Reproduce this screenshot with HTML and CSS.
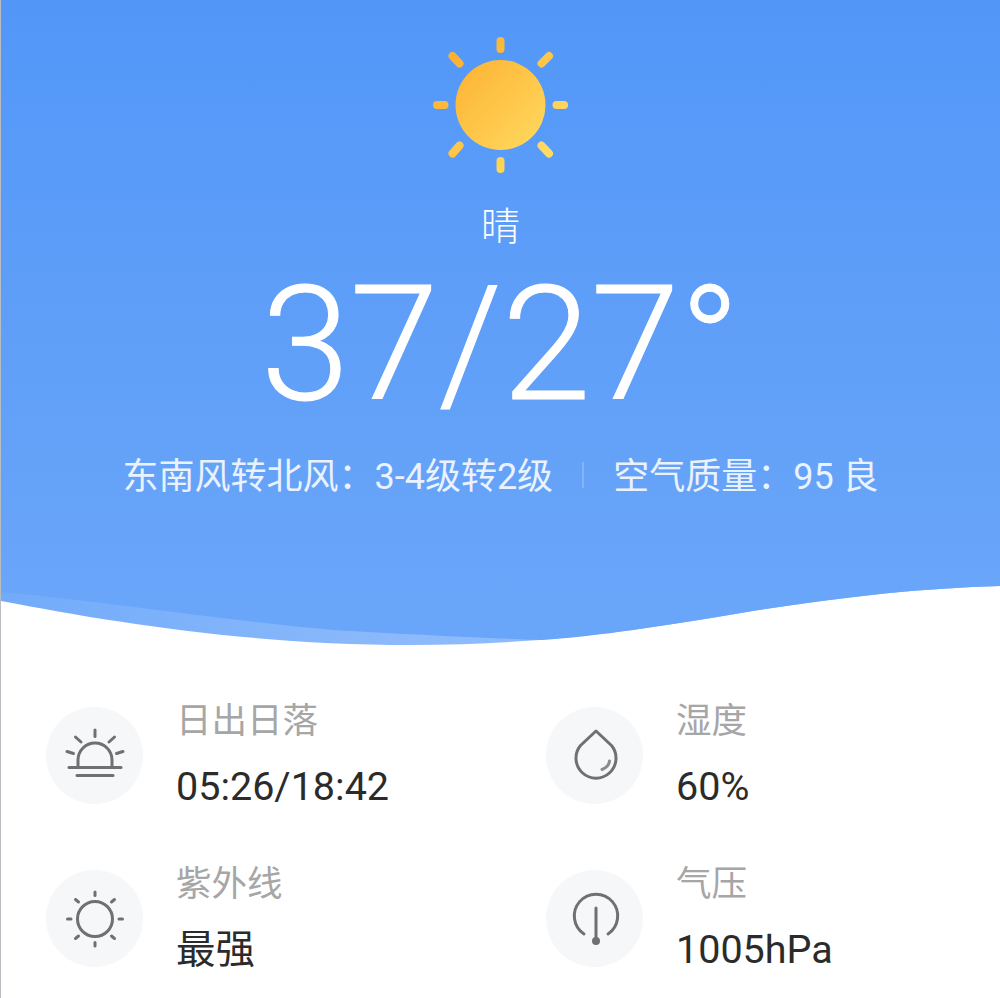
FILE: index.html
```html
<!DOCTYPE html>
<html lang="zh-CN">
  <head>
    <meta charset="utf-8" />
    <meta name="viewport" content="width=device-width, initial-scale=1" />
    <title>天气</title>
    <link rel="stylesheet" href="styles.css">
  </head>

  <body>
    <main class="page">
      <section class="hero">
        <svg class="sun" width="136" height="136" viewBox="0 0 136 136">
          <defs>
            <linearGradient id="sunFill" gradientUnits="userSpaceOnUse" x1="20" y1="20" x2="116" y2="116">
              <stop offset="0" stop-color="#fdb030" />
              <stop offset="1" stop-color="#ffdc62" />
            </linearGradient>
          </defs>
          <g stroke="url(#sunFill)" stroke-width="8" stroke-linecap="round" fill="none">
            <path d="M67.500 4V12" />
            <path d="M67.500 124V132" />
            <path d="M4 68H11.500" />
            <path d="M123.500 68H131" />
            <path d="M19.500 19L26.500 26.500" />
            <path d="M116 19L108.500 26.500" />
            <path d="M19.500 116.500L26.500 108.500" />
            <path d="M108.500 108.500L116 116.500" />
          </g>
          <circle cx="67.500" cy="68" r="45" fill="url(#sunFill)" />
        </svg>
        <div class="condition">晴</div>
        <div class="temp">37/27°</div>
        <div class="summary">
          <span>东南风转北风<span class="colon">：</span>3-4级转2级</span>
          <i class="divider"></i>
          <span>空气质量<span class="colon">：</span>95 良</span>
        </div>
      </section>
      <svg class="wave" width="1000" height="70" viewBox="0 0 1000 70">
        <defs>
          <linearGradient id="bandFade" gradientUnits="userSpaceOnUse" x1="0" y1="0" x2="420" y2="0">
            <stop offset="0" stop-color="#72abfa" />
            <stop offset="1" stop-color="#8dbafb" />
          </linearGradient>
        </defs>
        <path fill="url(#bandFade)" d="M0 0H1000V6C920 8 830 18 740 33C640 50 540 65 410 65C250 65 110 42 0 21Z" />
        <path class="wave-front" d="M0 0H1000V6C920 8 830 18 740 33C660 46 600 56 540 60C480 58 400 54 333 50C220 40 110 22 0 12Z" />
      </svg>
      <section class="stats">
        <div class="stat">
          <div class="stat-icon">
            <svg width="60" height="60" viewBox="0 0 60 60" fill="none" stroke="#6f7072" stroke-width="3" stroke-linecap="round">
              <path d="M13 41V34A17 17 0 0 1 47 34V41" />
              <path d="M4 41.500H56" />
              <path d="M12 49.500H48" />
              <path d="M30 4V10.500" />
              <path d="M10.500 11L16 16" />
              <path d="M49.500 11L44 16" />
              <path d="M2 25.500L8.500 27.500" />
              <path d="M58 25.500L51.500 27.500" />
            </svg>
          </div>
          <div class="stat-text">
            <div class="stat-label">日出日落</div>
            <div class="stat-value">05:26/18:42</div>
          </div>
        </div>
        <div class="stat">
          <div class="stat-icon">
            <svg width="60" height="60" viewBox="0 0 60 60" fill="none" stroke="#6f7072" stroke-width="3" stroke-linecap="round">
              <path d="M31 5L15.500 19.500A20 20 0 1 0 46.500 19.500Z" stroke-linejoin="round" />
              <path d="M37 43.500C41 42 44 39 44.500 35" stroke="#8a8b8d" />
            </svg>
          </div>
          <div class="stat-text">
            <div class="stat-label">湿度</div>
            <div class="stat-value">60%</div>
          </div>
        </div>
        <div class="stat">
          <div class="stat-icon">
            <svg width="60" height="60" viewBox="0 0 60 60" fill="none" stroke="#6f7072" stroke-width="3" stroke-linecap="round">
              <circle cx="30" cy="30" r="17.500" />
              <path d="M30 3V6.500" />
              <path d="M30 53.500V57" />
              <path d="M2.500 30H6" />
              <path d="M54 30H57.500" />
              <path d="M10.500 10.500L13.500 13" />
              <path d="M49.500 10.500L46.500 13" />
              <path d="M10.500 49.500L13.500 47" />
              <path d="M49.500 49.500L46.500 47" />
            </svg>
          </div>
          <div class="stat-text">
            <div class="stat-label">紫外线</div>
            <div class="stat-value">最强</div>
          </div>
        </div>
        <div class="stat">
          <div class="stat-icon">
            <svg width="60" height="60" viewBox="0 0 60 60" fill="none" stroke="#6f7072" stroke-width="3" stroke-linecap="round">
              <path d="M19 45A21.700 21.700 0 1 1 43 45" />
              <path d="M31 19V52" />
              <circle cx="31" cy="52" r="2.500" fill="#6f7072" />
            </svg>
          </div>
          <div class="stat-text">
            <div class="stat-label">气压</div>
            <div class="stat-value">1005hPa</div>
          </div>
        </div>
      </section>
    </main>
  </body>
</html>
```
FILE: styles.css
```css
html, body {
    margin: 0;
    padding: 0;
    background: #fff;
}
.page {
    width: 1000px;
    height: 998px;
    overflow: hidden;
    border-left: 1px solid #b9bcc0;
    box-sizing: border-box;
    font-family: Roboto, "Noto Sans CJK SC", sans-serif;
}
.hero {
    height: 580px;
    box-sizing: border-box;
    padding-top: 37px;
    display: flex;
    flex-direction: column;
    align-items: center;
    background: linear-gradient(#5297f8, #69a5f9);
    color: #fff;
}
.sun {
    display: block;
    margin-left: 1px;
}
.condition {
    margin-top: 32px;
    font-size: 39px;
    font-weight: 300;
    line-height: 44px;
}
.temp {
    margin-top: 2px;
    font-size: 160px;
    font-weight: 300;
    line-height: 188px;
    -webkit-text-stroke: 1px #fff;
}
.summary {
    margin-top: 11px;
    display: flex;
    align-items: center;
    font-size: 36px;
    line-height: 46px;
    color: #eaf2fe;
}
.colon {
    font-family: "Noto Sans CJK TC", sans-serif;
}
.divider {
    width: 2px;
    height: 26px;
    margin: 0 29px;
    background: #83b4fa;
}
.wave {
    display: block;
}
.wave-front {
    fill: #69a5f9;
}
.stats {
    margin-top: 57px;
    padding-left: 45px;
    display: grid;
    grid-template-columns: 500px 1fr;
    grid-auto-rows: 163px;
}
.stat {
    display: flex;
    align-items: flex-start;
}
.stat-icon {
    width: 97px;
    height: 97px;
    flex: none;
    display: flex;
    align-items: center;
    justify-content: center;
    border-radius: 50%;
    background: #f6f7f9;
}
.stat-text {
    margin-left: 33px;
    margin-top: -8px;
}
.stat-label {
    font-size: 35.500px;
    line-height: 44px;
    color: #a6a6a6;
}
.stat-value {
    margin-top: 22px;
    font-size: 39.500px;
    line-height: 44px;
    color: #2b2b2b;
}
```
